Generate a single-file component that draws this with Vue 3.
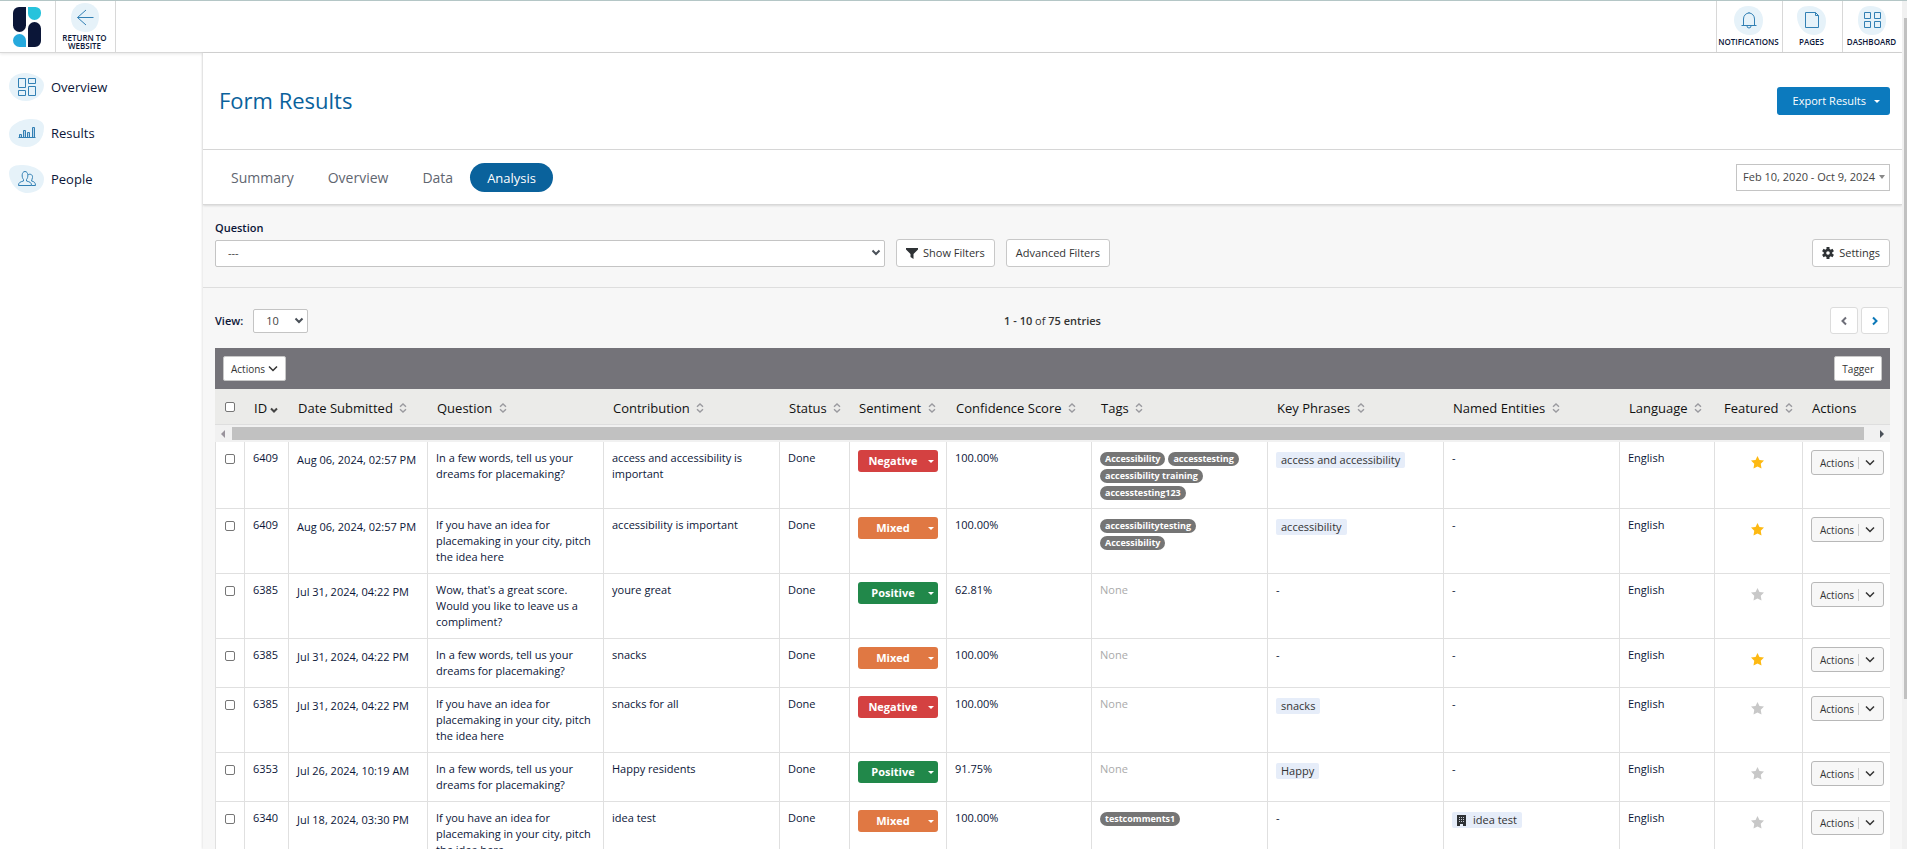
<script setup>
import { ref } from 'vue'

const navItems = [
  { label: 'Overview', icon: 'overview' },
  { label: 'Results', icon: 'results' },
  { label: 'People', icon: 'people' },
]
const tabs = ['Summary', 'Overview', 'Data', 'Analysis']
const activeTab = ref('Analysis')

const columns = [
  { label: 'ID', cls: 'w-id', sort: 'down' },
  { label: 'Date Submitted', cls: 'w-date', sort: 'both' },
  { label: 'Question', cls: 'w-question', sort: 'both' },
  { label: 'Contribution', cls: 'w-text', sort: 'both' },
  { label: 'Status', cls: 'w-status', sort: 'both' },
  { label: 'Sentiment', cls: 'w-sentiment', sort: 'both' },
  { label: 'Confidence Score', cls: 'w-score', sort: 'both' },
  { label: 'Tags', cls: 'w-tags', sort: 'both' },
  { label: 'Key Phrases', cls: 'w-text', sort: 'both' },
  { label: 'Named Entities', cls: 'w-text', sort: 'both' },
  { label: 'Language', cls: 'w-lang', sort: 'both' },
  { label: 'Featured', cls: 'w-featured', sort: 'both' },
  { label: 'Actions', cls: 'w-actions', sort: '' },
]

const words = 'In a few words, tell us your dreams for placemaking?'
const idea = 'If you have an idea for placemaking in your city, pitch the idea here'
const wow = "Wow, that's a great score. Would you like to leave us a compliment?"

const rows = [
  { id: 6409, date: 'Aug 06, 2024, 02:57 PM', question: words, text: 'access and accessibility is important', sentiment: 'Negative', score: '100.00%', tags: ['Accessibility', 'accesstesting', 'accessibility training', 'accesstesting123'], phrase: 'access and accessibility', entity: '', featured: true },
  { id: 6409, date: 'Aug 06, 2024, 02:57 PM', question: idea, text: 'accessibility is important', sentiment: 'Mixed', score: '100.00%', tags: ['accessibilitytesting', 'Accessibility'], phrase: 'accessibility', entity: '', featured: true },
  { id: 6385, date: 'Jul 31, 2024, 04:22 PM', question: wow, text: 'youre great', sentiment: 'Positive', score: '62.81%', tags: [], phrase: '', entity: '', featured: false },
  { id: 6385, date: 'Jul 31, 2024, 04:22 PM', question: words, text: 'snacks', sentiment: 'Mixed', score: '100.00%', tags: [], phrase: '', entity: '', featured: true },
  { id: 6385, date: 'Jul 31, 2024, 04:22 PM', question: idea, text: 'snacks for all', sentiment: 'Negative', score: '100.00%', tags: [], phrase: 'snacks', entity: '', featured: false },
  { id: 6353, date: 'Jul 26, 2024, 10:19 AM', question: words, text: 'Happy residents', sentiment: 'Positive', score: '91.75%', tags: [], phrase: 'Happy', entity: '', featured: false },
  { id: 6340, date: 'Jul 18, 2024, 03:30 PM', question: idea, text: 'idea test', sentiment: 'Mixed', score: '100.00%', tags: ['testcomments1'], phrase: '', entity: 'idea test', featured: false },
]
</script>

<template>
  <div class="shell">
    <div class="app">
      <header class="topbar">
        <a href="#" class="logo" aria-label="Home">
          <svg width="28" height="40" viewBox="0 0 28 40">
            <path d="M6 0h7v18.500a6.500 6.500 0 0 1-13 0V6a6 6 0 0 1 6-6z" fill="#0b1638" />
            <path d="M15 0h7.500A5.500 5.500 0 0 1 28 5.500v1a6.500 6.500 0 0 1-13 0z" fill="#27c3dc" />
            <path d="M22 40H15V21.500a6.500 6.500 0 0 1 13 0V34a6 6 0 0 1-6 6z" fill="#0b1638" />
            <path d="M13 40H6.500A6.500 6.500 0 0 1 6.500 27a6.500 6.500 0 0 1 6.500 6.500z" fill="#26a9dd" />
          </svg>
        </a>
        <a href="#" class="tile tile-return">
          <svg width="28" height="29" viewBox="0 0 28 29">
            <path class="blob" d="M14 0C22 0 28 6 28 13C28 22 24 29 15 29C6 29 0 24 0 15C0 6 6 0 14 0z" />
            <path class="line" d="M22.500 14.500H6.500M15 7L6.500 14.500L15 22" />
          </svg>
          <span>RETURN TO WEBSITE</span>
        </a>
        <div class="grow"></div>
        <a href="#" class="tile tile-bell">
          <svg width="29" height="29" viewBox="0 0 29 29">
            <path class="blob" d="M14 0C23 0 29 6 29 14C29 23 24 29 16 29C6 29 0 22 0 14C0 6 6 0 14 0z" />
            <path class="line" d="M7.500 19.500h15M9.500 19.500v-6.500a5.500 6 0 0 1 11 0v6.500M13 20a2 2 0 0 0 4 0M15 7v-1" />
          </svg>
          <span>NOTIFICATIONS</span>
        </a>
        <a href="#" class="tile">
          <svg width="29" height="29" viewBox="0 0 29 29">
            <path class="blob" d="M12 0C23 0 29 7 29 15C29 24 24 29 17 29C7 29 0 20 0 10C0 3 5 0 12 0z" />
            <path class="line" d="M8.500 6.500h10l3 3v12h-13zM18.500 6.500v3h3" />
          </svg>
          <span>PAGES</span>
        </a>
        <a href="#" class="tile">
          <svg width="28" height="29" viewBox="0 0 28 29">
            <path class="blob" d="M12 0C22 0 28 5 28 14C28 23 23 29 14 29C5 29 0 23 0 14C0 5 4 0 12 0z" />
            <path class="line" d="M6.500 6.500h6v6h-6zM16.500 6.500h6v6h-6zM6.500 15.500h6v6h-6zM16.500 15.500h6v6h-6z" />
          </svg>
          <span>DASHBOARD</span>
        </a>
      </header>

      <div class="body">
        <nav class="sidebar">
          <a v-for="item in navItems" :key="item.label" href="#" class="side-link">
            <svg v-if="item.icon === 'overview'" width="35" height="28" viewBox="0 0 35 28">
              <path class="blob" d="M16 0C25 0 35 5 35 12C35 21 26 28 17 28C6 28 0 20 0 13C0 5 7 0 16 0z" />
              <path class="line" d="M9.500 5.500h7v9h-7zM19.500 5.500h7v5h-7zM9.500 17.500h7v5h-7zM19.500 13.500h7v9h-7z" />
            </svg>
            <svg v-else-if="item.icon === 'results'" width="35" height="28" viewBox="0 0 35 28">
              <path class="blob" d="M23 0C30 0 35 3 35 8C35 20 28 28 17 28C7 28 0 23 0 15C0 6 11 0 23 0z" />
              <path class="line bars" d="M9.500 18.500h17M10.500 18.500v-3h2v3M14.500 18.500v-7h2v7M18.500 18.500v-5h2v5M23.500 18.500v-10h2v10" />
            </svg>
            <svg v-else width="35" height="28" viewBox="0 0 35 28">
              <path class="blob" d="M12 0C25 0 35 6 35 14C35 23 27 28 18 28C9 28 0 18 0 8C0 3 4 0 12 0z" />
              <path class="line" d="M9.500 20.500c0-3 1.500-3.500 5-4.500v-1.500c-2-2-2-8 1.500-8s3.500 6 1.500 8v1.500c3.500 1 5 1.500 5 4.500zM19 10c1-1.500 5-1 4.500 2.500c0 1.500-1 2-1 3.500c2.500.500 4 1.500 4 4.500h-4" />
            </svg>
            <span>{{ item.label }}</span>
          </a>
        </nav>

        <main class="main">
          <section class="title-row">
            <h1>Form Results</h1>
            <button type="button" class="export">Export Results <i class="caret"></i></button>
          </section>

          <section class="tab-row">
            <div class="tabs">
              <button v-for="t in tabs" :key="t" type="button" class="tab" :class="{ active: t === activeTab }" @click="activeTab = t">{{ t }}</button>
            </div>
            <button type="button" class="range">Feb 10, 2020 - Oct 9, 2024 <i class="caret"></i></button>
          </section>

          <section class="filters">
            <label for="question">Question</label>
            <div class="filter-row">
              <div class="select question-select">
                <select id="question"><option>---</option></select>
                <svg width="10" height="8" viewBox="0 0 10 8"><path d="M1.500 1.500L5 5L8.500 1.500" /></svg>
              </div>
              <button type="button" class="btn">
                <svg width="12" height="11" viewBox="0 0 12 11"><path d="M0 0h12v1.500L7.500 6v5L4.500 9V6L0 1.500z" fill="#2e3235" /></svg>
                Show Filters
              </button>
              <button type="button" class="btn">Advanced Filters</button>
              <div class="grow"></div>
              <button type="button" class="btn settings">
                <svg width="12" height="12" viewBox="0 0 12 12">
                  <g fill="#2e3235">
                    <rect x="4.500" y="0" width="3" height="12" />
                    <rect x="4.500" y="0" width="3" height="12" transform="rotate(60 6 6)" />
                    <rect x="4.500" y="0" width="3" height="12" transform="rotate(120 6 6)" />
                    <circle cx="6" cy="6" r="4.300" />
                  </g>
                  <circle cx="6" cy="6" r="1.800" fill="#fff" />
                </svg>
                Settings
              </button>
            </div>
          </section>

          <section class="results">
            <div class="pager-row">
              <div class="view">
                <label for="view">View:</label>
                <div class="select view-select">
                  <select id="view"><option>10</option></select>
                  <svg width="10" height="8" viewBox="0 0 10 8"><path d="M1.500 1.500L5 5L8.500 1.500" /></svg>
                </div>
              </div>
              <p><b>1 - 10</b> of <b>75 entries</b></p>
              <div class="pager">
                <button type="button" aria-label="Previous page"><svg width="6" height="10" viewBox="0 0 6 10"><path d="M5 1.500L1.500 5L5 8.500" stroke="#6d6e78" /></svg></button>
                <button type="button" aria-label="Next page"><svg width="6" height="10" viewBox="0 0 6 10"><path d="M1 1.500L4.500 5L1 8.500" stroke="#0c78b8" /></svg></button>
              </div>
            </div>

            <div class="bulk">
              <button type="button" class="small-btn">Actions <svg width="10" height="7" viewBox="0 0 10 7"><path d="M1 1.500L5 5.500L9 1.500" /></svg></button>
              <button type="button" class="small-btn">Tagger</button>
            </div>

            <table>
              <colgroup>
                <col class="w-check" />
                <col v-for="c in columns" :key="c.label" :class="c.cls" />
              </colgroup>
              <thead>
                <tr class="head">
                  <th class="check"><input type="checkbox" aria-label="Select all" /></th>
                  <th v-for="c in columns" :key="c.label">
                    {{ c.label }}
                    <svg v-if="c.sort === 'both'" width="8" height="10" viewBox="0 0 8 10"><path d="M1 3.800L4 1L7 3.800M1 6.200L4 9L7 6.200" stroke="#9a9a9f" stroke-width="1.400" /></svg>
                    <svg v-else-if="c.sort === 'down'" class="down" width="8" height="6" viewBox="0 0 8 6"><path d="M1 1.500L4 4.500L7 1.500" stroke="#444" /></svg>
                  </th>
                </tr>
                <tr>
                  <td :colspan="columns.length + 1" class="scroll-cell">
                    <div class="hscroll">
                      <svg width="17" height="8" viewBox="0 0 17 8"><path d="M10 0v8L6 4z" fill="#99939c" /></svg>
                      <div class="thumb"></div>
                      <svg width="26" height="8" viewBox="0 0 26 8"><path d="M16 0v8L20 4z" fill="#4a5058" /></svg>
                    </div>
                  </td>
                </tr>
              </thead>
              <tbody>
                <tr v-for="(r, i) in rows" :key="i">
                  <td class="check"><input type="checkbox" :aria-label="'Select entry ' + r.id" /></td>
                  <td>{{ r.id }}</td>
                  <td class="date">{{ r.date }}</td>
                  <td>{{ r.question }}</td>
                  <td>{{ r.text }}</td>
                  <td>Done</td>
                  <td><button type="button" class="sentiment" :class="r.sentiment.toLowerCase()"><span>{{ r.sentiment }}</span><i class="caret"></i></button></td>
                  <td>{{ r.score }}</td>
                  <td>
                    <div v-if="r.tags.length" class="tags"><span v-for="t in r.tags" :key="t" class="tag">{{ t }}</span></div>
                    <span v-else class="none">None</span>
                  </td>
                  <td><span v-if="r.phrase" class="chip">{{ r.phrase }}</span><template v-else>-</template></td>
                  <td>
                    <span v-if="r.entity" class="chip">
                      <svg width="9" height="11" viewBox="0 0 9 11"><path d="M0 0h9v11H6V9H3v2H0z" fill="#2e3235" /><path d="M2 2.500h5M2 4.500h5M2 6.500h5" stroke="#c4c8d2" stroke-dasharray="1 1" /></svg>
                      {{ r.entity }}
                    </span>
                    <template v-else>-</template>
                  </td>
                  <td>English</td>
                  <td class="feat">
                    <button type="button" aria-label="Toggle featured" :aria-pressed="r.featured">
                      <svg width="13" height="13" viewBox="0 0 12 12"><path d="M6 0l1.800 3.600 4.200.600-3 2.900.700 4.400L6 9.700l-3.700 1.800.700-4.400L0 4.200l4.200-.600z" :fill="r.featured ? '#fdb913' : '#c8c8c8'" /></svg>
                    </button>
                  </td>
                  <td>
                    <button type="button" class="row-actions"><span>Actions</span><svg width="10" height="7" viewBox="0 0 10 7"><path d="M1 1.500L5 5.500L9 1.500" /></svg></button>
                  </td>
                </tr>
              </tbody>
            </table>
          </section>
        </main>
      </div>
    </div>
    <div class="vscroll"><div class="vthumb"></div></div>
  </div>
</template>

<style>
body {
  margin: 0;
}
</style>

<style scoped>
.shell {
  display: flex;
  height: 100vh;
  overflow: hidden;
  box-sizing: border-box;
  border-top: 1px solid #b4c6c6;
  background: #fff;
  color: #0b1638;
  font-family: "Open Sans", "Noto Sans", sans-serif;
  font-size: 11px;
  line-height: 16px;
}
.shell *,
.shell *::before {
  box-sizing: border-box;
}
button,
select,
input {
  font: inherit;
  color: inherit;
  margin: 0;
}
button {
  padding: 0;
  cursor: pointer;
}
a {
  color: inherit;
  text-decoration: none;
}
svg {
  display: block;
  flex: none;
  fill: none;
}
.grow {
  flex: 1;
}
.app {
  flex: 1;
  min-width: 0;
  display: flex;
  flex-direction: column;
}
.vscroll {
  flex: none;
  width: 5px;
  padding: 17px 0 0 2px;
  background: #f1f1f1;
}
.vthumb {
  height: 82%;
  background: #c1c1c1;
}
.blob {
  fill: #e6f2f9;
}
.line {
  stroke: #3280b4;
}
.bars {
  fill: #b9d2e8;
}

/* top bar */
.topbar {
  flex: none;
  display: flex;
  height: 52px;
  border-bottom: 1px solid #d8d8d8;
  box-shadow: 0 1px 3px rgba(0, 0, 0, 0.1);
}
.logo {
  width: 56px;
  padding: 6px 13px;
  border-right: 1px solid #d8d8d8;
}
.tile {
  width: 60px;
  padding: 5px 2px 0 0;
  display: flex;
  flex-direction: column;
  align-items: center;
  gap: 3px;
  font-size: 8px;
  line-height: 8px;
  font-weight: 600;
  text-align: center;
  border-left: 1px solid #d8d8d8;
}
.tile-bell {
  width: 66px;
}
.tile-return {
  padding-top: 2px;
  gap: 2px;
  border-left: 0;
  border-right: 1px solid #d8d8d8;
}
.body {
  flex: 1;
  min-height: 0;
  display: flex;
}

/* sidebar */
.sidebar {
  flex: none;
  width: 203px;
  padding: 20px 9px;
  display: flex;
  flex-direction: column;
  gap: 18px;
}
.side-link {
  display: flex;
  align-items: center;
  gap: 7px;
  font-size: 13px;
  font-weight: 500;
  line-height: 28px;
}

/* main */
.main {
  flex: 1;
  min-width: 0;
  background: #f7f7f7;
  box-shadow: -1px 0 2px rgba(0, 0, 0, 0.1);
}
.title-row,
.tab-row {
  display: flex;
  align-items: center;
  justify-content: space-between;
  padding: 0 12px 0 16px;
  background: #fff;
  border-bottom: 1px solid #d8d8d8;
  box-shadow: 0 1px 2px rgba(0, 0, 0, 0.12);
}
.title-row {
  height: 97px;
}
h1 {
  margin: 0;
  padding-bottom: 2px;
  color: #0a629c;
  font-size: 22px;
  line-height: 30px;
  font-weight: 400;
}
.caret {
  width: 0;
  height: 0;
  border: 3px solid transparent;
  border-top-color: currentColor;
  border-bottom: 0;
}
.export {
  display: flex;
  align-items: center;
  gap: 8px;
  height: 28px;
  padding: 0 10px 0 16px;
  border: 0;
  border-radius: 3px;
  background: #0c7abe;
  color: #fff;
}
.tab-row {
  height: 55px;
  padding-left: 11px;
}
.tabs {
  display: flex;
}
.tab {
  height: 29px;
  padding: 1px 17px 0;
  border: 0;
  border-radius: 15px;
  background: none;
  color: #5f6670;
  font-size: 14px;
}
.tab.active {
  background: #0a629c;
  color: #fff;
  font-size: 13px;
  font-weight: 500;
}
.range {
  display: flex;
  align-items: center;
  gap: 4px;
  height: 27px;
  padding: 0 4px 0 6px;
  border: 1px solid #c4c4c4;
  background: #fff;
  color: #444;
}
.range .caret {
  border-width: 4px 3px 0;
  color: #888;
}
.filters {
  padding: 15px 12px 20px;
  border-bottom: 1px solid #dedede;
}
label {
  display: block;
  font-weight: 600;
}
.filter-row {
  display: flex;
  align-items: center;
  gap: 11px;
  margin-top: 3px;
}
.select {
  position: relative;
}
.select select {
  appearance: none;
  width: 100%;
  height: 27px;
  padding: 0 12px;
  border: 1px solid #c4c4c4;
  border-radius: 2px;
  background: #fff;
  color: #444;
}
.select svg {
  position: absolute;
  right: 4px;
  top: 50%;
  margin-top: -4px;
  stroke: #4a5058;
  stroke-width: 2;
  pointer-events: none;
}
.question-select {
  width: 40%;
}
.btn {
  display: flex;
  align-items: center;
  gap: 5px;
  height: 28px;
  padding: 0 9px;
  border: 1px solid #c8c8c8;
  border-radius: 3px;
  background: #fff;
  color: #333;
}
.results {
  padding: 19px 12px 0;
}
.pager-row {
  display: grid;
  grid-template-columns: 1fr auto 1fr;
  align-items: center;
  height: 27px;
  margin-bottom: 14px;
}
.pager-row p {
  margin: 0;
  color: #333;
}
b {
  font-weight: 600;
}
.view {
  display: flex;
  align-items: center;
  gap: 10px;
}
.view-select {
  width: 55px;
}
.view-select select {
  height: 24px;
}
.pager {
  display: flex;
  justify-content: flex-end;
  gap: 3px;
  padding-right: 1px;
}
.pager button {
  display: flex;
  align-items: center;
  justify-content: center;
  width: 28px;
  height: 27px;
  border: 1px solid #dcdcdc;
  border-radius: 3px;
  background: #fff;
}
.pager svg {
  stroke-width: 2;
}
.bulk {
  display: flex;
  align-items: center;
  justify-content: space-between;
  height: 41px;
  padding: 0 8px;
  background: #747379;
}
.small-btn {
  display: flex;
  align-items: center;
  gap: 3px;
  height: 25px;
  padding: 0 7px;
  border: 1px solid #c8c8c8;
  border-radius: 2px;
  background: #fff;
  color: #333;
  font-size: 10px;
}
.small-btn svg,
.row-actions svg {
  stroke: #333;
  stroke-width: 1.500;
}

/* table */
table {
  width: 100%;
  table-layout: fixed;
  border-collapse: separate;
  border-spacing: 0;
  background: #fff;
}
.w-check { width: 30px; }
.w-id { width: 44px; }
.w-date { width: 139px; }
.w-question,
.w-text { width: 176px; }
.w-status { width: 70px; }
.w-sentiment { width: 97px; }
.w-score { width: 145px; }
.w-tags { width: 176px; }
.w-lang { width: 95px; }
.w-featured { width: 88px; }
.w-actions { width: 87px; }
.head th {
  height: 36px;
  padding: 2px 0 0 9px;
  background: #ebebe9;
  border-bottom: 1px solid #dedede;
  color: #111;
  font-size: 13px;
  font-weight: 400;
  text-align: left;
  white-space: nowrap;
}
.head svg {
  display: inline-block;
  margin-left: 3px;
}
.head .down {
  margin-left: 0;
  stroke-width: 2;
}
.scroll-cell {
  padding: 0;
}
.hscroll {
  display: flex;
  align-items: center;
  height: 17px;
  background: #f1f1f1;
}
.thumb {
  flex: 1;
  height: 13px;
  background: #c1c1c1;
}
tbody td {
  padding: 8px 4px 8px 8px;
  border-right: 1px solid #e0e0e0;
  border-bottom: 1px solid #e0e0e0;
  vertical-align: top;
}
tbody td:first-child {
  border-left: 1px solid #e0e0e0;
}
tbody td:last-child {
  border-right: 0;
}
tbody td.date {
  padding-top: 10px;
  padding-bottom: 0;
  white-space: nowrap;
}
.check input {
  appearance: none;
  display: block;
  width: 10px;
  height: 10px;
  border: 1px solid #767676;
  border-radius: 2px;
  background: #fff;
}
tbody .check {
  padding: 12px 0 0 9px;
}
.head .check {
  padding: 0 0 0 10px;
}
.sentiment {
  display: flex;
  align-items: center;
  width: 80px;
  height: 22px;
  margin-bottom: -6px;
  padding-right: 4px;
  border: 0;
  border-radius: 3px;
  color: #fff;
  font-weight: 700;
}
.sentiment span {
  flex: 1;
}
.negative { background: #d44141; }
.mixed { background: #e07843; }
.positive { background: #21884a; }
.tags {
  display: flex;
  flex-wrap: wrap;
  gap: 3px;
  padding-top: 2px;
}
.tag {
  height: 14px;
  padding: 0 5px;
  border-radius: 7px;
  background: #757575;
  color: #fff;
  font-size: 9px;
  line-height: 14px;
  font-weight: 700;
}
.none {
  color: #aaa;
}
.chip {
  display: inline-flex;
  align-items: center;
  gap: 7px;
  height: 16px;
  margin-top: 2px;
  padding: 0 5px;
  border-radius: 2px;
  background: #e6edf9;
  color: #333;
}
tbody td.feat {
  padding-right: 10px;
}
.feat button {
  display: block;
  margin: 6px auto 0;
  border: 0;
  background: none;
}
.row-actions {
  display: flex;
  align-items: center;
  width: 73px;
  height: 25px;
  margin-bottom: -10px;
  padding: 0 8px;
  border: 1px solid #b8b8b8;
  border-radius: 3px;
  background: #f7f7f7;
  color: #333;
  font-size: 10px;
}
.row-actions span {
  flex: 1;
  margin-right: 6px;
  border-right: 1px solid #ccc;
  line-height: 12px;
  text-align: left;
}
</style>
